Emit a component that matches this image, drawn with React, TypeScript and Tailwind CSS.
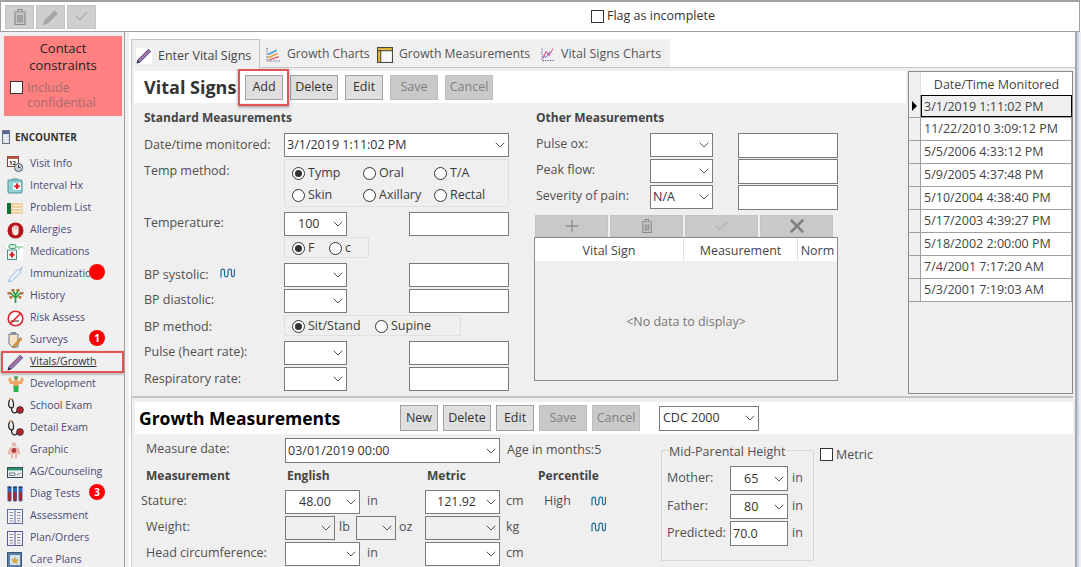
import type { ReactNode } from "react";
import { ChevronDown, Check, Plus, X } from "lucide-react";

const font = "font-['Open_Sans','Noto_Sans',sans-serif]";

const Badge = ({ n }: { n?: string }) => (
  <span className="absolute left-[89px] top-[1px] z-10 flex h-[16px] w-[16px] items-center justify-center rounded-full bg-[#fe0000] text-[10px] font-bold text-white">{n}</span>
);

const Pencil = ({ size = 18 }: { size?: number }) => (
  <svg width={size} height={size} viewBox="0 0 18 18">
    <path d="M1 17 L2.5 13 L14 1.5 L16.5 4 L5 15.5 Z" fill="#8c86c4" stroke="#2f2c66" strokeWidth="0.9" />
    <path d="M3.5 13.5 L14.5 2.8" stroke="#d9566b" strokeWidth="1.1" />
    <path d="M1 17 L2 14 L4 16 Z" fill="#222" />
  </svg>
);

const TrashIcon = ({ w = 14, h = 18, color = "#8a8a8a" }: { w?: number; h?: number; color?: string }) => (
  <svg width={w} height={h} viewBox="0 0 14 18" fill="none" stroke={color} strokeWidth="1.2">
    <path d="M1 4 H13 M5 4 V1.5 H9 V4" />
    <path d="M2 4.5 V16.5 H12 V4.5" fill="#c4c4c4" />
    <path d="M5 7 V14.5 M7 7 V14.5 M9 7 V14.5" />
  </svg>
);

const Stetho = () => (
  <svg width="17" height="17" viewBox="0 0 17 17">
    <path d="M3 1 C0 6 2 10 5 10 C7 10 7 4 5 1 M4.5 10 C4.5 16 9 16 10.5 12.5" fill="none" stroke="#222" strokeWidth="1.3" />
    <path d="M2 1.2 h3.5" stroke="#c08a5a" strokeWidth="1.6" />
    <circle cx="13" cy="12" r="3.4" fill="#b02030" stroke="#333" strokeWidth="0.8" />
  </svg>
);

const Book = ({ color = "#5a6aa0" }: { color?: string }) => (
  <svg width="16" height="15" viewBox="0 0 16 15">
    <rect x="0.5" y="0.5" width="15" height="14" fill="#f4f4f8" stroke={color} />
    <path d="M8 0.5 V14.5" stroke={color} />
    <path d="M2.5 3.5 H6 M2.5 6.5 H6 M2.5 9.5 H6 M2.5 12 H6 M10 3.5 H13.5 M10 6.5 H13.5 M10 9.5 H13.5 M10 12 H13.5" stroke="#8a8aa0" />
  </svg>
);

const navIcons: Record<string, ReactNode> = {
  "Visit Info": (
    <svg width="16" height="16" viewBox="0 0 16 16">
      <rect x="0.5" y="0.5" width="11" height="10" fill="#fff" stroke="#8a4030" />
      <rect x="0.5" y="0.5" width="11" height="2.5" fill="#b85c48" />
      <text x="2" y="9" fontSize="6" fontWeight="700" fill="#222">12</text>
      <circle cx="11.5" cy="11.5" r="4" fill="#c9d0de" stroke="#4a5570" />
      <path d="M11.5 9 V11.5 H13.5" stroke="#222" fill="none" strokeWidth="0.8" />
    </svg>
  ),
  "Interval Hx": (
    <svg width="16" height="16" viewBox="0 0 16 16">
      <path d="M5.5 2 V0.8 H10.5 V2" fill="none" stroke="#6aa" />
      <rect x="1" y="2" width="14" height="13" rx="1" fill="#8fd3d6" stroke="#4d8d92" />
      <rect x="6" y="5" width="8" height="7" fill="#f0fbfb" />
      <path d="M10 5.5 V11 M7.2 8.2 H12.8" stroke="#e2202c" strokeWidth="2" />
    </svg>
  ),
  "Problem List": (
    <svg width="16" height="11" viewBox="0 0 16 11">
      <rect width="16" height="11" fill="#f2cf9e" />
      <rect width="4" height="11" fill="#187038" />
      <path d="M5.5 2.5 H15 M5.5 5.5 H15 M5.5 8.5 H15" stroke="#fdf4e3" />
    </svg>
  ),
  Allergies: (
    <svg width="17" height="17" viewBox="0 0 17 17">
      <circle cx="8.5" cy="8.5" r="8" fill="#b3151b" />
      <path d="M5.6 8 V5.4 M7.3 7.5 V4 M9 7.5 V3.8 M10.7 7.7 V4.8" stroke="#fbe8e0" strokeWidth="1.5" strokeLinecap="round" />
      <path d="M4.9 7.6 H11.5 V10.5 C11.5 13 9.5 13.4 8 13.4 C6 13.4 4.9 11 4.9 7.6Z" fill="#fbe8e0" />
    </svg>
  ),
  Medications: (
    <svg width="16" height="16" viewBox="0 0 16 16">
      <rect width="16" height="16" fill="#fff" />
      <rect x="2" y="0.5" width="7" height="4" rx="1.5" fill="#cfeccb" stroke="#3f9a78" />
      <path d="M9 3 H16 M12 3 V6" stroke="#8fd59f" strokeWidth="1.4" />
      <rect x="0.5" y="6" width="9" height="9.5" fill="#eef5f0" stroke="#4f8f88" />
      <path d="M5 8 V13.5 M2.5 10.7 H7.5" stroke="#d8202a" strokeWidth="2" />
    </svg>
  ),
  Immunization: (
    <svg width="17" height="17" viewBox="0 0 17 17">
      <path d="M16 1 L12 5 M13 2 L15 4 M11 3 L14 6 L5 15 L2 15.5 L2.5 12.5 Z M2.5 14.5 L0.5 16.5" fill="#e8f1fb" stroke="#9dbde0" strokeWidth="1" />
    </svg>
  ),
  History: (
    <svg width="17" height="16" viewBox="0 0 17 16">
      <path d="M8.5 15 V7 M8.5 10 L3.5 5 M8.5 10 L13.5 5 M8.5 7 L6 3 M8.5 7 L11 3" stroke="#1f9e3e" strokeWidth="1.6" fill="none" />
      <g fill="#b4713d">
        <rect x="0.5" y="4" width="3.5" height="2.5" /><rect x="13" y="4" width="3.5" height="2.5" />
        <rect x="4.5" y="1" width="3" height="2.5" /><rect x="9.5" y="1" width="3" height="2.5" />
        <rect x="2.5" y="8" width="3" height="2.5" /><rect x="11.5" y="8" width="3" height="2.5" />
      </g>
    </svg>
  ),
  "Risk Assess": (
    <svg width="17" height="17" viewBox="0 0 17 17">
      <circle cx="8.5" cy="8.5" r="7.3" fill="#fff" stroke="#d8262c" strokeWidth="1.6" />
      <path d="M3.5 10 H12 V12 H3.5Z" fill="#9a8f85" />
      <path d="M3 14 L14 3" stroke="#d8262c" strokeWidth="1.6" />
    </svg>
  ),
  Surveys: (
    <svg width="16" height="18" viewBox="0 0 16 18">
      <path d="M2 3 H11 V16 H5 L2 13Z" fill="#f6e4c2" stroke="#6f7488" />
      <rect x="4" y="1" width="5" height="3" fill="#87909f" />
      <path d="M15 8 L8 16 L6 17 L6.5 14.5 L13.5 6.5Z" fill="#e2a23a" stroke="#8a5e1c" strokeWidth="0.6" />
    </svg>
  ),
  "Vitals/Growth": <Pencil size={17} />,
  Development: (
    <svg width="18" height="18" viewBox="0 0 18 18">
      <path d="M1 4 L4 2 L5 6 L7 6 V4 H11 V6 L13 6 L14 2 L17 4 L15 9 L12 9 V11 L6 11 V9 L3 9Z" fill="#eba765" />
      <rect x="7.2" y="1" width="3.6" height="3.4" fill="#5ba75a" />
      <rect x="6.5" y="11" width="5" height="6" fill="#2bb24c" />
    </svg>
  ),
  "School Exam": <Stetho />,
  "Detail Exam": <Stetho />,
  Graphic: (
    <svg width="14" height="17" viewBox="0 0 14 17">
      <circle cx="7" cy="2.5" r="2.3" fill="#e6b5ab" />
      <path d="M2.5 5.5 H11.5 L13.5 12 L11 12.5 L10 9 V16.5 H8 V12 H6 V16.5 H4 V9 L3 12.5 L0.5 12Z" fill="#ecb4ab" />
      <ellipse cx="7" cy="8.5" rx="2.3" ry="2.4" fill="#a93a3c" />
    </svg>
  ),
  "AG/Counseling": (
    <svg width="16" height="11" viewBox="0 0 16 11">
      <rect x="0.5" y="0.5" width="15" height="10" fill="#eef2f2" stroke="#39495e" />
      <rect x="1" y="1" width="14" height="2.4" fill="#269369" />
      <path d="M2.5 6 H8 V8.5 H2.5Z M10 8 L13.5 6" stroke="#6f7d8c" fill="none" />
    </svg>
  ),
  "Diag Tests": (
    <svg width="16" height="16" viewBox="0 0 16 16">
      {[0.5, 6, 11.5].map((x) => (
        <g key={x}>
          <rect x={x} y="0.5" width="4" height="15" rx="1.5" fill="#3465b5" />
          <rect x={x + 0.6} y="6" width="2.8" height="9" rx="1" fill="#a9282c" />
          <rect x={x} y="0.5" width="4" height="1.5" fill="#22406f" />
        </g>
      ))}
    </svg>
  ),
  Assessment: <Book />,
  "Plan/Orders": <Book color="#5a55a5" />,
  "Care Plans": (
    <svg width="15" height="16" viewBox="0 0 15 16">
      <rect x="0.5" y="0.5" width="14" height="15" fill="#5c7fa8" stroke="#3b5778" />
      <rect x="3" y="3" width="10" height="10" fill="#d6e2ee" />
      <path d="M8 4.5 L9.2 7.3 L12 7.6 L9.9 9.4 L10.6 12 L8 10.5 L5.4 12 L6.1 9.4 L4 7.6 L6.8 7.3Z" fill="#d9a73c" />
    </svg>
  ),
};

const navItems = [
  "Visit Info", "Interval Hx", "Problem List", "Allergies", "Medications", "Immunization", "History", "Risk Assess", "Surveys",
  "Vitals/Growth", "Development", "School Exam", "Detail Exam", "Graphic", "AG/Counseling", "Diag Tests", "Assessment", "Plan/Orders", "Care Plans",
];

const Trend = () => (
  <svg width="15" height="10" viewBox="0 0 15 10" fill="none" stroke="#1d6a96" strokeWidth="1.2">
    <path d="M1 9.5 V3 C1 0.5 4.5 0.5 4.5 3 V7 C4.5 9.5 8 9.5 8 7 V3 C8 0.5 11.5 0.5 11.5 3 V6.5 C11.5 9.5 14.5 9.5 14.5 6.5 V1" />
  </svg>
);

const Select = ({ w, value = "", h = 24, pad = "pl-[13px]", disabled = false }: { w: number; value?: string; h?: number; pad?: string; disabled?: boolean }) => (
  <div
    className={`flex shrink-0 items-center justify-between border border-[#7a7a7a] ${pad} text-[12.5px] leading-none text-[#333] ${disabled ? "bg-[#efefef]" : "bg-white"}`}
    style={{ width: w, height: h }}
  >
    <span className="pt-[1px]">{value}</span>
    <ChevronDown size={16} strokeWidth={1.5} className="text-[#555]" />
  </div>
);

const Input = ({ w = 100, h = 24, value = "" }: { w?: number; h?: number; value?: string }) => (
  <div className="flex shrink-0 items-center border border-[#7a7a7a] bg-white pl-[2px] pt-[1px] text-[12.5px] text-[#333]" style={{ width: w, height: h }}>
    {value}
  </div>
);

const Radio = ({ on = false, label, w }: { on?: boolean; label: string; w?: number }) => (
  <div className="flex items-center gap-[3px] text-[12.5px] leading-none text-[#3c3c3c]" style={{ width: w }}>
    <span className="flex h-[13px] w-[13px] shrink-0 items-center justify-center rounded-full border border-[#333] bg-white">
      {on && <span className="h-[7px] w-[7px] rounded-full bg-[#333]" />}
    </span>
    {label}
  </div>
);

const Btn = ({ label, w, h = 25, disabled = false }: { label: string; w: number; h?: number; disabled?: boolean }) => (
  <div
    className={`flex shrink-0 items-center justify-center border pt-[1px] text-[12.5px] ${disabled ? "border-[#bdbdbd] bg-[#c9c9c9] text-[#7f7f7f]" : "border-[#a0a0a0] bg-[#dfdfdf] text-[#333]"}`}
    style={{ width: w, height: h }}
  >
    {label}
  </div>
);

const Label = ({ children, pt = "pt-[3px]" }: { children: ReactNode; pt?: string }) => (
  <div className={`flex w-[140px] shrink-0 items-start ${pt} text-[12.5px] leading-[18px] text-[#505050]`}>{children}</div>
);

const Sidebar = () => (
  <div className="flex w-[125px] shrink-0 flex-col overflow-hidden border-r border-[#a0a0a0] bg-[#f0f0f0]">
    <div className="ml-[4px] mr-[2px] mt-[4px] flex h-[80px] shrink-0 flex-col items-center bg-[#ff8080] pt-[4px] text-[13px] leading-[17px] text-[#222]">
      <div className="text-center">Contact<br />constraints</div>
      <div className="mt-[6px] flex w-full gap-[4px] pl-[6px] text-[12.5px] leading-[15px] text-[#a56d6d]">
        <span className="mt-[1px] h-[13px] w-[13px] shrink-0 border border-[#333] bg-white" />
        <span>Include<br />confidential</span>
      </div>
    </div>
    <div className="mt-[14px] flex h-[14px] shrink-0 items-center pl-[2px] text-[10px] font-bold text-[#333]">
      <svg width="8" height="14" viewBox="0 0 8 14">
        <rect x="0.5" y="0.5" width="7" height="13" fill="#d8dde6" stroke="#6b7280" />
        <rect x="1" y="1" width="6" height="3" fill="#4c6a9a" />
        <path d="M2 6 H6 M2 8.5 H6 M2 11 H6" stroke="#fff" strokeWidth="1.2" />
      </svg>
      <span className="ml-[5px]">ENCOUNTER</span>
    </div>
    <div className="mt-[9px] flex shrink-0 flex-col">
      {navItems.map((item) => {
        const active = item === "Vitals/Growth";
        return (
          <div key={item} className={`relative flex h-[22px] shrink-0 items-center whitespace-nowrap text-[10.5px] text-[#4a4a72] ${active ? "ml-[1px] border-2 border-[#e25555] pl-[4px] shadow-[0_1px_3px_rgba(0,0,0,0.35)]" : "pl-[7px]"}`}>
            <span className="flex w-[23px] shrink-0 items-center">{navIcons[item]}</span>
            <span className={active ? "text-[#333] underline" : ""}>{item}</span>
            {item === "Immunization" && <Badge />}
            {item === "Surveys" && <Badge n="1" />}
            {item === "Diag Tests" && <Badge n="3" />}
          </div>
        );
      })}
    </div>
  </div>
);

const TabIcon = ({ kind }: { kind: string }) => {
  if (kind === "bars")
    return (
      <svg width="15" height="15" viewBox="0 0 14 14" fill="none">
        <path d="M1 1 V13 H13" stroke="#6a6a9a" strokeDasharray="1.5 1" />
        <path d="M2 10 L11 6" stroke="#e0a030" strokeWidth="1.4" />
        <path d="M2 7 L10 3" stroke="#46a0d0" strokeWidth="1.4" />
        <path d="M3 12 L12 9" stroke="#e06070" strokeWidth="1.4" />
      </svg>
    );
  if (kind === "table")
    return (
      <svg width="16" height="16" viewBox="0 0 15 15">
        <rect x="0.5" y="0.5" width="14" height="14" fill="#fafafa" stroke="#4a4a3a" />
        <rect x="0.5" y="0.5" width="14" height="3" fill="#e6b93c" stroke="#4a4a3a" />
        <rect x="0.5" y="3.5" width="3" height="11" fill="#e6b93c" stroke="#4a4a3a" />
      </svg>
    );
  return (
    <svg width="15" height="15" viewBox="0 0 15 14" fill="none">
      <path d="M1 1 V13 H14" stroke="#6a6a9a" strokeDasharray="1.5 1" />
      <path d="M2 11 L5 4 L8 8 L12 1" stroke="#d04080" />
      <path d="M2 8 L5 10 L9 4" stroke="#8a6ad0" />
    </svg>
  );
};

const Tabs = () => (
  <div className="ml-[2px] mt-[7px] flex h-[28px] w-[539px] shrink-0 items-stretch bg-[#f0f0f0] text-[12.5px] text-[#555]">
    <div className="relative z-10 flex h-[30px] w-[129px] shrink-0 items-center gap-[6px] border border-b-0 border-[#c4c4c4] bg-[#efefef] pl-[4px] pt-[3px] text-[#444]">
      <span className="bg-white"><Pencil size={16} /></span>
      Enter Vital Signs
    </div>
    <div className="ml-[6px] flex w-[111px] shrink-0 items-center gap-[6px] whitespace-nowrap pt-[3px] text-[12.2px]"><TabIcon kind="bars" />Growth Charts</div>
    <div className="flex w-[164px] shrink-0 items-center gap-[6px] whitespace-nowrap pt-[3px] text-[12.2px]"><TabIcon kind="table" />Growth Measurements</div>
    <div className="flex items-center gap-[5px] whitespace-nowrap pt-[3px]"><TabIcon kind="line" />Vital Signs Charts</div>
  </div>
);

const dates = [
  "3/1/2019 1:11:02 PM", "11/22/2010 3:09:12 PM", "5/5/2006 4:33:12 PM", "5/9/2005 4:37:48 PM", "5/10/2004 4:38:40 PM",
  "5/17/2003 4:39:27 PM", "5/18/2002 2:00:00 PM", "7/4/2001 7:17:20 AM", "5/3/2001 7:19:03 AM",
];

const DateGrid = () => (
  <div className="ml-[2px] mt-[3px] flex h-[323px] w-[165px] shrink-0 flex-col border border-[#8a8a8a] bg-[#efefef] text-[12.5px] text-[#444]">
    <div className="flex h-[23px] shrink-0 bg-white">
      <div className="w-[12px] border-r border-[#e0e0e0] bg-[#f0f0f0]" />
      <div className="flex-1 text-center leading-[25px] text-[#444]">Date/Time Monitored</div>
    </div>
    {dates.map((d, i) => (
      <div key={d} className="flex h-[23px] shrink-0 border-b border-[#a0a0a0]">
        <div className="flex w-[12px] items-center justify-center border-r border-[#a0a0a0] bg-[#f0f0f0]">
          {i === 0 && <span className="h-0 w-0 border-y-[5px] border-l-[5px] border-y-transparent border-l-black" />}
        </div>
        <div className={`flex-1 leading-[22px] ${i === 0 ? "border border-black bg-[#efefef] pl-[2px]" : "border-r border-[#a0a0a0] bg-white pl-[3px]"}`}>{d}</div>
      </div>
    ))}
  </div>
);

const tool = "flex h-[22px] w-[73px] items-center justify-center border border-[#c4c4c4] bg-[#c9c9c9] text-[#8f8f8f]";

const OtherMeasurements = () => (
  <div className="flex w-[304px] shrink-0 flex-col">
    <div className="pl-[2px] text-[12px] font-bold leading-[18px] text-[#444]">Other Measurements</div>
    <div className="mt-[6px] flex flex-col">
      {["Pulse ox:", "Peak flow:", "Severity of pain:"].map((l) => (
        <div key={l} className="flex h-[26px] items-start">
          <div className="w-[116px] pl-[2px] pt-[2px] text-[12.5px] leading-[18px] text-[#505050]">{l}</div>
          <Select w={63} value={l === "Severity of pain:" ? "N/A" : ""} pad="pl-[2px]" />
          <div className="ml-[25px]"><Input h={25} /></div>
        </div>
      ))}
    </div>
    <div className="ml-[1px] mt-[4px] flex gap-[2px]">
      <div className={tool}><Plus size={20} strokeWidth={1.6} /></div>
      <div className={tool}><TrashIcon w={12} h={16} /></div>
      <div className={tool}><Check size={15} strokeWidth={3} className="text-[#b8b8b8]" /></div>
      <div className={tool}><X size={22} strokeWidth={2.8} className="text-[#808080]" /></div>
    </div>
    <div className="flex h-[144px] w-[304px] flex-col border border-[#8a8a8a] bg-[#efefef] text-[12.5px] text-[#444]">
      <div className="flex h-[23px] bg-white leading-[25px]">
        <div className="w-[149px] border-r border-[#e0e0e0] text-center">Vital Sign</div>
        <div className="w-[114px] border-r border-[#e0e0e0] text-center">Measurement</div>
        <div className="flex-1 text-center">Norm</div>
      </div>
      <div className="flex flex-1 items-center justify-center pt-[3px] text-[#777]">&lt;No data to display&gt;</div>
    </div>
  </div>
);

const TempRow = ({ label, pt }: { label: ReactNode; pt?: string }) => (
  <div className="flex h-[24px]">
    <Label pt={pt}>{label}</Label>
    <Select w={63} />
    <div className="ml-[62px]"><Input /></div>
  </div>
);

const StandardMeasurements = () => (
  <div className="flex w-[400px] shrink-0 flex-col pl-[10px]">
    <div className="text-[12px] font-bold leading-[18px] text-[#444]">Standard Measurements</div>
    <div className="mt-[6px] flex h-[24px]">
      <Label>Date/time monitored:</Label>
      <Select w={225} value="3/1/2019 1:11:02 PM" pad="pl-[2px]" />
    </div>
    <div className="mt-[2px] flex h-[48px]">
      <Label>Temp method:</Label>
      <div className="grid w-[225px] grid-cols-[71px_71px_1fr] items-center border border-[#e0e0e0] pl-[7px] pt-[2px]">
        <Radio on label="Tymp" />
        <Radio label="Oral" />
        <Radio label="T/A" />
        <Radio label="Skin" />
        <Radio label="Axillary" />
        <Radio label="Rectal" />
      </div>
    </div>
    <div className="mt-[5px] flex h-[24px]">
      <Label pt="pt-[2px]">Temperature:</Label>
      <Select w={63} value="100" />
      <div className="ml-[62px]"><Input /></div>
    </div>
    <div className="ml-[140px] mt-[1px] flex h-[21px] w-[85px] items-center border border-[#e0e0e0] pl-[7px] pt-[1px]">
      <Radio on label="F" w={37} />
      <Radio label="c" />
    </div>
    <div className="mt-[5px]">
      <TempRow label={<><span>BP systolic:</span><span className="ml-[11px] mt-[2px]"><Trend /></span></>} />
    </div>
    <div className="mt-[2px]"><TempRow label="BP diastolic:" pt="pt-[2px]" /></div>
    <div className="mt-[2px] flex h-[21px]">
      <Label>BP method:</Label>
      <div className="flex w-[177px] items-center border border-[#e0e0e0] pl-[7px] pt-[1px]">
        <Radio on label="Sit/Stand" w={83} />
        <Radio label="Supine" />
      </div>
    </div>
    <div className="mt-[5px]"><TempRow label="Pulse (heart rate):" pt="pt-[2px]" /></div>
    <div className="mt-[2px]"><TempRow label="Respiratory rate:" /></div>
  </div>
);

const VitalSigns = () => (
  <div className="flex h-[328px] pl-[2px]">
    <div className="flex w-[772px] shrink-0 flex-col pt-[3px]">
      <div className="flex h-[32px] shrink-0 items-center bg-white pl-[10px]">
        <div className="w-[101px] whitespace-nowrap pt-[1px] text-[18px] font-bold text-[#333]">Vital Signs</div>
        <div className="relative">
          <Btn label="Add" w={38} />
          <div className="absolute -bottom-[6px] -left-[7px] -right-[6px] -top-[6px] border-2 border-[#e25555] shadow-[0_1px_3px_rgba(0,0,0,0.4)]" />
        </div>
        <div className="ml-[7px] flex gap-[7px]">
          <Btn label="Delete" w={48} />
          <Btn label="Edit" w={38} />
          <Btn label="Save" w={48} disabled />
          <Btn label="Cancel" w={48} disabled />
        </div>
      </div>
      <div className="mt-[6px] flex">
        <StandardMeasurements />
        <OtherMeasurements />
      </div>
    </div>
    <DateGrid />
  </div>
);

const GrowthRow = ({ label, children, pl = "pl-[11px]" }: { label: string; children: ReactNode; pl?: string }) => (
  <div className="flex h-[26px] items-start">
    <div className={`w-[150px] shrink-0 ${pl} pt-[2px] text-[12.5px] leading-[18px] text-[#505050]`}>{label}</div>
    {children}
  </div>
);

const unit = "pt-[2px] text-[12.5px] leading-[18px] text-[#505050]";

const GrowthMeasurements = () => (
  <div className="mt-[4px] pl-[3px]">
    <div className="flex h-[32px] w-[938px] items-center bg-white pl-[4px]">
      <div className="w-[261px] whitespace-nowrap text-[17.5px] font-bold text-black">Growth Measurements</div>
      <Btn label="New" w={38} h={26} />
      <div className="ml-[5px]"><Btn label="Delete" w={48} h={26} /></div>
      <div className="ml-[5px]"><Btn label="Edit" w={38} h={26} /></div>
      <div className="ml-[5px]"><Btn label="Save" w={48} h={26} disabled /></div>
      <div className="ml-[5px]"><Btn label="Cancel" w={48} h={26} disabled /></div>
      <div className="ml-[19px]"><Select w={100} h={25} value="CDC 2000" pad="pl-[3px]" /></div>
    </div>
    <div className="flex">
      <div className="flex w-[526px] shrink-0 flex-col pt-[4px]">
        <div className="flex h-[25px] items-start">
          <div className="w-[150px] shrink-0 pl-[11px] pt-[2px] text-[12.5px] leading-[18px] text-[#505050]">Measure date:</div>
          <Select w={215} value="03/01/2019 00:00" h={25} pad="pl-[2px]" />
          <div className="ml-[7px] whitespace-nowrap pt-[3px] text-[12.5px] leading-[18px] text-[#505050]">Age in months:5</div>
        </div>
        <div className="flex h-[27px] items-start pt-[4px] text-[12px] font-bold leading-[18px] text-[#444]">
          <div className="w-[152px] pl-[11px]">Measurement</div>
          <div className="w-[140px]">English</div>
          <div className="w-[111px]">Metric</div>
          <div>Percentile</div>
        </div>
        <GrowthRow label="Stature:" pl="pl-[6px]">
          <Select w={75} value="48.00" />
          <div className={`ml-[7px] w-[58px] ${unit}`}>in</div>
          <Select w={75} value="121.92" pad="pl-[11px]" />
          <div className={`ml-[6px] w-[38px] ${unit}`}>cm</div>
          <div className={`w-[47px] ${unit}`}>High</div>
          <div className="mt-[6px]"><Trend /></div>
        </GrowthRow>
        <GrowthRow label="Weight:">
          <Select w={50} disabled />
          <div className={`ml-[4px] w-[17px] ${unit}`}>lb</div>
          <Select w={40} disabled />
          <div className={`ml-[3px] w-[26px] ${unit}`}>oz</div>
          <Select w={75} disabled />
          <div className={`ml-[6px] w-[85px] ${unit}`}>kg</div>
          <div className="mt-[6px]"><Trend /></div>
        </GrowthRow>
        <GrowthRow label="Head circumference:">
          <Select w={75} />
          <div className={`ml-[7px] w-[58px] ${unit}`}>in</div>
          <Select w={75} />
          <div className={`ml-[6px] ${unit}`}>cm</div>
        </GrowthRow>
      </div>
      <div className="relative mt-[16px] h-[111px] w-[153px] shrink-0 border border-[#d8d8d8] pl-[5px] pt-[15px] text-[12.5px] text-[#505050]">
        <div className="absolute -top-[8px] left-[7px] whitespace-nowrap bg-[#efefef] pr-[1px] leading-[18px]">Mid-Parental Height</div>
        <div className="flex h-[25px] items-center">
          <div className="w-[63px]">Mother:</div>
          <Select w={58} value="65" h={25} />
          <div className="ml-[4px]">in</div>
        </div>
        <div className="mt-[3px] flex h-[25px] items-center">
          <div className="w-[63px]">Father:</div>
          <Select w={58} value="80" h={25} />
          <div className="ml-[4px]">in</div>
        </div>
        <div className="mt-[2px] flex h-[25px] items-center">
          <div className="w-[63px]">Predicted:</div>
          <Input w={58} h={25} value="70.0" />
          <div className="ml-[4px]">in</div>
        </div>
      </div>
      <div className="ml-[6px] mt-[14px] flex h-[13px] items-center gap-[3px] text-[12.5px] text-[#505050]">
        <span className="h-[13px] w-[13px] border border-[#333] bg-white" />
        <span className="mt-[2px]">Metric</span>
      </div>
    </div>
  </div>
);

const App = () => (
  <div className={`flex h-[567px] w-[1081px] flex-col overflow-hidden bg-white ${font}`}>
    <div className="flex h-[32px] w-[1080px] shrink-0 items-center border border-t-2 border-[#a0a0a0] pl-[4px]">
      <div className="flex gap-[2px]">
        <div className="flex h-[24px] w-[29px] items-center justify-center border border-[#c4c4c4] bg-[#cfcfcf]"><TrashIcon /></div>
        <div className="flex h-[24px] w-[29px] items-center justify-center border border-[#c4c4c4] bg-[#cfcfcf]">
          <svg width="18" height="18" viewBox="0 0 16 16"><path d="M1 15 L2 11 L11 2 L14 5 L5 14Z" fill="#a5a5a5" /></svg>
        </div>
        <div className="flex h-[24px] w-[29px] items-center justify-center border border-[#c4c4c4] bg-[#cfcfcf] text-[#b5b5b5]"><Check size={15} strokeWidth={3} /></div>
      </div>
      <div className="ml-[495px] flex items-center gap-[3px] text-[12.5px] text-[#333]">
        <span className="h-[13px] w-[13px] border border-[#333] bg-white" />
        Flag as incomplete
      </div>
    </div>
    <div className="flex min-h-0 flex-1 bg-[#f0f0f0]">
      <Sidebar />
      <div className="flex w-[952px] min-w-0 shrink-0 flex-col border-l-4 border-r-2 border-l-[#f0f0f0] border-r-[#a9a9a9] bg-white">
        <Tabs />
        <div className="ml-[2px] flex-1 border-l border-t border-[#c8c8c8] bg-[#efefef]">
          <VitalSigns />
          <div className="mr-[2px] h-[2px] bg-[#c4c4c4]" />
          <GrowthMeasurements />
        </div>
      </div>
      <div className="w-[2px] bg-[#c0d8f0]" />
    </div>
  </div>
);

export default App;
